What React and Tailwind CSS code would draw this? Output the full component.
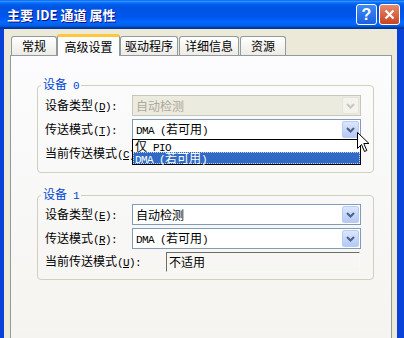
import React from "react";

// half-width ascii, about 6px per char like the old bitmap font
const A = ({ children }) => (
  <span className="whitespace-pre font-['Liberation_Mono',monospace] text-[11px] tracking-[-0.6px]">{children}</span>
);

const Lbl = ({ t, k, className = "" }) => (
  <div className={`shrink-0 whitespace-nowrap ${className}`}>
    {t}
    <A>
      (<u>{k}</u>):
    </A>
  </div>
);

const Chevron = ({ disabled }) => (
  <div
    className={`ml-auto mr-[1px] flex h-[17px] w-[17px] items-center justify-center rounded-[2px] border ${
      disabled
        ? "border-[#e6e4da] bg-[#f3f2ec]"
        : "border-[#b9cbf3] bg-[linear-gradient(to_bottom,#dce6fd,#b4c9f7)]"
    }`}
  >
    <svg width="9" height="6" viewBox="0 0 9 6">
      <path
        d="M1 1 L4.5 4.5 L8 1"
        fill="none"
        stroke={disabled ? "#c9c7ba" : "#4d6185"}
        strokeWidth="2"
      />
    </svg>
  </div>
);

const DropList = () => (
  <div className="absolute left-[-1px] top-[19px] z-10 w-[229px] border border-black bg-white">
    <div className="h-[12px] whitespace-pre pl-[2px] leading-[12px]">
      仅<A> PIO</A>
    </div>
    <div className="h-[12px] whitespace-pre border border-dotted border-[#c6d3ee] bg-[#316ac5] pl-[1px] leading-[10px] text-white">
      <A>DMA (</A>若可用<A>)</A>
    </div>
  </div>
);

const Cursor = () => (
  <svg
    className="absolute left-[224px] top-[12px] z-20"
    width="13"
    height="21"
    viewBox="0 0 13 21"
  >
    <path
      d="M0.5 0.5 L0.5 16.5 L4.5 12.5 L7.5 19.5 L9.8 18.5 L6.8 11.5 L12 11.5 Z"
      fill="#fff"
      stroke="#000"
      strokeWidth="1"
    />
  </svg>
);

const Combo = ({ children, disabled, open }) => (
  <div
    className={`relative flex h-[21px] w-[229px] items-center border pl-[3px] ${
      disabled
        ? "border-[#c9c7ba] bg-[#ecebe0] text-[#aca899]"
        : "border-[#7f9db9] bg-white"
    }`}
  >
    <span className="whitespace-pre">{children}</span>
    <Chevron disabled={disabled} />
    {open && <DropList />}
    {open && <Cursor />}
  </div>
);

const Dma = () => (
  <>
    <A>DMA (</A>若可用<A>)</A>
  </>
);

const Tab = ({ children, active, className = "" }) =>
  active ? (
    <div
      className={`relative z-10 -mb-[1px] flex h-[22px] items-center justify-center rounded-t-[3px] border-x border-t-[3px] border-x-[#919b9c] border-t-[#ffc73c] bg-[#fcfcfe] ${className}`}
    >
      {children}
    </div>
  ) : (
    <div
      className={`flex h-[19px] items-center justify-center rounded-t-[3px] border-x border-t border-[#919b9c] bg-[linear-gradient(to_bottom,#ffffff,#ecebe6)] ${className}`}
    >
      {children}
    </div>
  );

const Group = ({ n, children, className = "" }) => (
  <fieldset
    className={`flex flex-col gap-[3px] rounded-[4px] border border-[#d0d0bf] pl-[7px] pr-[12px] ${className}`}
  >
    <legend className="-ml-[4px] px-[2px] leading-[14px] text-[#0046d5]">
      设备<A> {n}</A>
    </legend>
    {children}
  </fieldset>
);

export default function App() {
  return (
    <div className="flex h-[338px] w-[404px] flex-col overflow-hidden bg-[#0842d8] font-['Noto_Sans_CJK_SC',sans-serif] text-[12px] leading-[14px] text-black">
      {/* title bar */}
      <div className="flex h-[29px] shrink-0 items-center bg-[linear-gradient(to_bottom,#0058ee_0%,#3593ff_4%,#288eff_6%,#127dff_8%,#036ffc_10%,#0262ee_14%,#0057e5_20%,#0054e3_24%,#0055eb_56%,#005bf5_66%,#026afe_76%,#0062ef_86%,#0052d6_92%,#0040ab_94%,#003092_100%)] pl-[7px] pr-[4px]">
        <div className="whitespace-pre text-[13px] font-bold text-white [text-shadow:1px_1px_#0f1089]">
          主要 IDE 通道 属性
        </div>
        <div className="ml-auto flex gap-[2px]">
          <div className="flex h-[21px] w-[21px] items-center justify-center rounded-[3px] border border-white bg-[linear-gradient(to_bottom,#3d8cf5,#1d5fe0)] font-['Liberation_Sans',sans-serif] text-[16px] font-bold text-white">
            ?
          </div>
          <div className="flex h-[21px] w-[21px] items-center justify-center rounded-[3px] border border-white bg-[linear-gradient(to_bottom,#e68a6e,#c9431f)]">
            <svg width="11" height="11" viewBox="0 0 11 11">
              <path d="M1.5 1.5 L9.5 9.5 M9.5 1.5 L1.5 9.5" stroke="#fff" strokeWidth="2.2" />
            </svg>
          </div>
        </div>
      </div>

      {/* dialog body */}
      <div className="ml-[4px] mr-[7px] flex-1 bg-[#ece9d8] pl-[6px] pr-[5px] pt-[5px]">
        <div className="flex h-[21px] items-end pl-[1px]">
          <Tab className="w-[46px]">常规</Tab>
          <Tab active className="w-[63px]">高级设置</Tab>
          <Tab className="w-[58px]">驱动程序</Tab>
          <Tab className="ml-[1px] w-[60px]">详细信息</Tab>
          <Tab className="ml-[1px] w-[46px]">资源</Tab>
        </div>

        <div className="relative flex h-[320px] flex-col gap-[14px] border border-[#919b9c] bg-[linear-gradient(to_bottom,#fcfcfe,#f4f3ee)] pl-[26px] pr-[17px] pt-[21px]">
          <Group n="0" className="pb-[8px] pt-[2px]">
            <div className="flex items-center">
              <Lbl t="设备类型" k="D" className="w-[87px]" />
              <Combo disabled>自动检测</Combo>
            </div>
            <div className="relative z-10 flex items-center">
              <Lbl t="传送模式" k="T" className="w-[87px]" />
              <Combo open>
                <Dma />
              </Combo>
            </div>
            <div className="flex h-[21px] items-center">
              <Lbl t="当前传送模式" k="C" className="w-[121px]" />
              <div className="flex h-[21px] w-[194px] items-center border border-b-white border-l-[#716f64] border-r-white border-t-[#716f64] pl-[2px]">
                不适用
              </div>
            </div>
          </Group>

          <Group n="1" className="pb-[7px] pt-[1px]">
            <div className="flex items-center">
              <Lbl t="设备类型" k="E" className="w-[87px]" />
              <Combo>自动检测</Combo>
            </div>
            <div className="flex items-center">
              <Lbl t="传送模式" k="R" className="w-[87px]" />
              <Combo>
                <Dma />
              </Combo>
            </div>
            <div className="flex items-center">
              <Lbl t="当前传送模式" k="U" className="w-[121px]" />
              <div className="flex h-[20px] w-[194px] items-center border border-b-[#f8f8f4] border-l-[#716f64] border-r-[#f8f8f4] border-t-[#716f64] pl-[2px]">
                不适用
              </div>
            </div>
          </Group>
        </div>
      </div>
    </div>
  );
}
